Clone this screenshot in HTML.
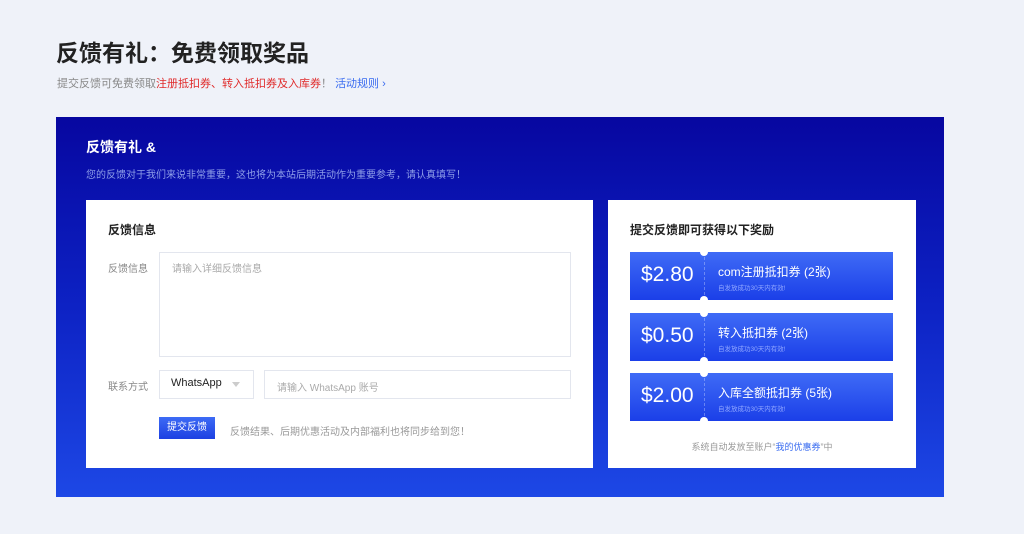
<!DOCTYPE html>
<html><head><meta charset="utf-8"><style>
*{margin:0;padding:0;box-sizing:border-box}
body{width:1024px;height:534px;background:#eff2f9;font-family:"Liberation Sans","Noto Sans CJK SC",sans-serif;position:relative;overflow:hidden;color:#333}
.a{position:absolute}
h1{position:absolute;left:56px;top:34px;font-size:23px;font-weight:bold;color:#222;letter-spacing:0}
.sub{left:57px;top:75px;font-size:11px;color:#888}
.sub .r{color:#e02a2a}.sub .b{color:#3a6cf0}
.ban{left:56px;top:117px;width:888px;height:380px;background:linear-gradient(180deg,#0707a0 0%,#0d22c4 50%,#1d48e6 100%)}
.card{background:#fff}
.lbl{font-size:10px;color:#888}
.box{border:1px solid #e3e6ee;background:#fff}
.cp{left:630px;width:263px;height:48px;background:linear-gradient(180deg,#3f6bf6,#1b3fe8);color:#fff}
.cp .p{position:absolute;left:11px;top:11px;font-size:21px}
.cp .t{position:absolute;left:88px;top:11px;font-size:12px}
.cp .s{position:absolute;left:88px;top:30px;font-size:6.5px;color:#8fa6ff}
.cp .d{position:absolute;left:74px;top:0;height:48px;border-left:1px dashed rgba(255,255,255,.3)}
.cp .c1,.cp .c2{position:absolute;left:70px;width:8px;height:8px;border-radius:50%;background:#fff}
.cp .c1{top:-4px}.cp .c2{bottom:-4px}
</style></head><body>
<h1>反馈有礼：免费领取奖品</h1>
<div class="a sub">提交反馈可免费领取<span class="r">注册抵扣券、转入抵扣券及入库券</span>！ <span class="b">活动规则 ›</span></div>
<div class="a ban"></div>
<div class="a" style="left:86px;top:137px;color:#fff;font-size:14px;font-weight:bold">反馈有礼 &amp;</div>
<div class="a" style="left:86px;top:166px;color:#8f9fe8;font-size:10px">您的反馈对于我们来说非常重要，这也将为本站后期活动作为重要参考，请认真填写！</div>
<div class="a card" style="left:86px;top:200px;width:507px;height:268px"></div>
<div class="a" style="left:108px;top:221px;font-size:12px;font-weight:bold;color:#222">反馈信息</div>
<div class="a lbl" style="left:108px;top:260px">反馈信息</div>
<div class="a box" style="left:159px;top:252px;width:412px;height:105px"></div>
<div class="a lbl" style="left:172px;top:260px;color:#aaa">请输入详细反馈信息</div>
<div class="a lbl" style="left:108px;top:378px">联系方式</div>
<div class="a box" style="left:159px;top:370px;width:95px;height:29px"></div>
<div class="a" style="left:171px;top:377px;font-size:11px;color:#222">WhatsApp</div>
<div class="a" style="left:232px;top:382px;border:4px solid transparent;border-top:5px solid #ccc"></div>
<div class="a box" style="left:264px;top:370px;width:307px;height:29px"></div>
<div class="a lbl" style="left:277px;top:379px;color:#aaa">请输入 WhatsApp 账号</div>
<div class="a" style="left:159px;top:417px;width:56px;height:22px;background:linear-gradient(#3d6bf5,#1d40e2);color:#fff;font-size:10px;text-align:center;line-height:22px">提交反馈</div>
<div class="a lbl" style="left:230px;top:423px;color:#999">反馈结果、后期优惠活动及内部福利也将同步给到您！</div>
<div class="a card" style="left:608px;top:200px;width:308px;height:268px"></div>
<div class="a" style="left:630px;top:221px;font-size:12px;font-weight:bold;color:#222">提交反馈即可获得以下奖励</div>
<div class="a cp" style="top:252px"><div class="d"></div><div class="c1"></div><div class="c2"></div><div class="p">$2.80</div><div class="t">com注册抵扣券 (2张)</div><div class="s">自发放成功30天内有效!</div></div>
<div class="a cp" style="top:313px"><div class="d"></div><div class="c1"></div><div class="c2"></div><div class="p">$0.50</div><div class="t">转入抵扣券 (2张)</div><div class="s">自发放成功30天内有效!</div></div>
<div class="a cp" style="top:373px"><div class="d"></div><div class="c1"></div><div class="c2"></div><div class="p">$2.00</div><div class="t">入库全额抵扣券 (5张)</div><div class="s">自发放成功30天内有效!</div></div>
<div class="a" style="left:608px;width:308px;top:440px;text-align:center;font-size:9px;color:#999">系统自动发放至账户“<span style="color:#3a6cf0">我的优惠券</span>”中</div>
</body></html>
